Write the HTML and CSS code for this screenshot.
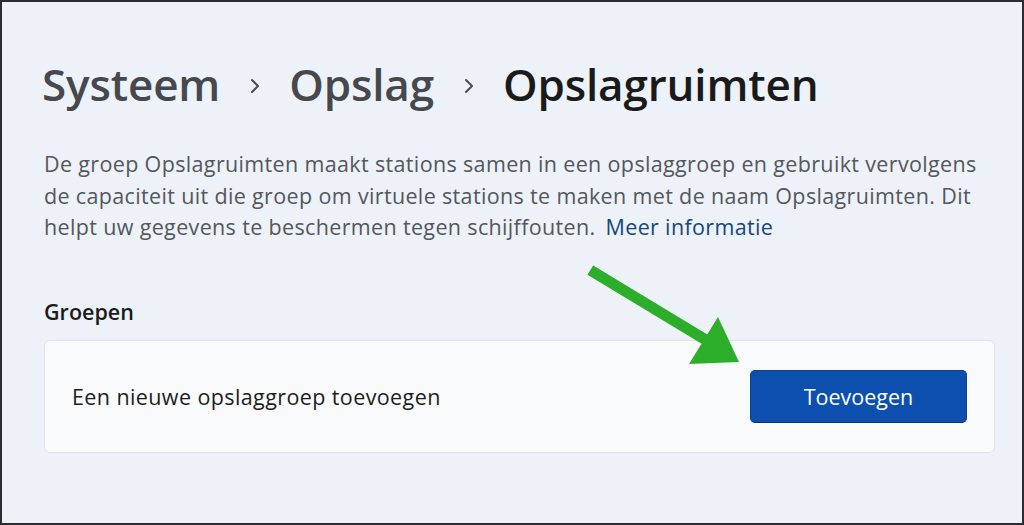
FILE: index.html
```html
<!DOCTYPE html>
<html>
<head>
    <title>Opslagruimten</title>
    <link rel="stylesheet" href="styles.css">
</head>
<body>
    <div class="frame">
        <h1 class="crumbs">
            <span class="crumb">Systeem</span>
            <svg class="chev" width="12" height="18" viewBox="0 0 12 18"><path d="M3 3 L9 9 L3 15" fill="none" stroke="#4a4d52" stroke-width="2" stroke-linecap="round" stroke-linejoin="round"/></svg>
            <span class="crumb">Opslag</span>
            <svg class="chev" width="12" height="18" viewBox="0 0 12 18"><path d="M3 3 L9 9 L3 15" fill="none" stroke="#4a4d52" stroke-width="2" stroke-linecap="round" stroke-linejoin="round"/></svg>
            <span class="crumb current">Opslagruimten</span>
        </h1>

        <p class="intro">
            De groep Opslagruimten maakt stations samen in een opslaggroep en gebruikt vervolgens<br>
            de capaciteit uit die groep om virtuele stations te maken met de naam Opslagruimten. Dit<br>
            helpt uw gegevens te beschermen tegen schijffouten. <a href="#" class="more">Meer informatie</a>
        </p>

        <h2 class="section">Groepen</h2>
        <div class="card">
            <span class="card-label">Een nieuwe opslaggroep toevoegen</span>
            <button type="button" class="primary">Toevoegen</button>
        </div>

        <!-- annotation arrow drawn over the screenshot -->
        <svg class="arrow" width="1024" height="525" viewBox="0 0 1024 525">
            <line x1="595" y1="273" x2="706" y2="340" stroke="#2cae2a" stroke-width="11" stroke-linecap="square"/>
            <polygon points="718,317 689,364 739,362" fill="#2cae2a"/>
        </svg>
    </div>
</body>
</html>
```

FILE: styles.css
```css
html, body {
    margin: 0;
    padding: 0;
}

body {
    font-family: "Open Sans", "Noto Sans", sans-serif;
    background-color: #2b2d30;
}

.frame {
    position: relative;
    box-sizing: border-box;
    width: 1020px;
    height: 521px;
    margin: 2px;
    padding: 48px 27px 0 38px;
    background-color: #edf1f8;
    color: #1b1b1b;
}

.crumbs {
    display: flex;
    align-items: center;
    margin: 0 0 0 2px;
    font-size: 44px;
    font-weight: 600;
    letter-spacing: -0.15px;
    line-height: 68px;
}

.crumb {
    color: #46484d;
}

.crumb.current {
    color: #1a1a1a;
}

.chev {
    margin: 4px 28px 0 29px;
}

.intro {
    margin: 30px 0 0 4px;
    font-size: 21.5px;
    line-height: 31.5px;
    color: #54575c;
    letter-spacing: 0.35px;
    white-space: nowrap;
}

.more {
    color: #16467e;
    text-decoration: none;
    margin-left: 4px;
}

.section {
    margin: 55px 0 0 4px;
    font-size: 21.5px;
    font-weight: 600;
    line-height: 28px;
    color: #1b1b1b;
}

.card {
    display: flex;
    align-items: center;
    justify-content: space-between;
    box-sizing: border-box;
    height: 113px;
    margin: 14px 0 0 4px;
    padding: 0 27px 0 27px;
    background-color: #f9fafc;
    border: 1px solid #e0e3e9;
    border-radius: 6px;
}

.card-label {
    font-size: 21.5px;
    color: #1d1d1d;
    letter-spacing: 0.4px;
}

.primary {
    width: 217px;
    height: 53px;
    font-family: inherit;
    font-size: 21.5px;
    color: #fff;
    background-color: #0c4fae;
    border: 1px solid #0a4397;
    border-bottom-color: #07336f;
    border-radius: 5px;
    cursor: pointer;
}

.primary:hover {
    background-color: #1a5cbc;
}

.arrow {
    position: absolute;
    left: -2px;
    top: -2px;
    pointer-events: none;
}
```
